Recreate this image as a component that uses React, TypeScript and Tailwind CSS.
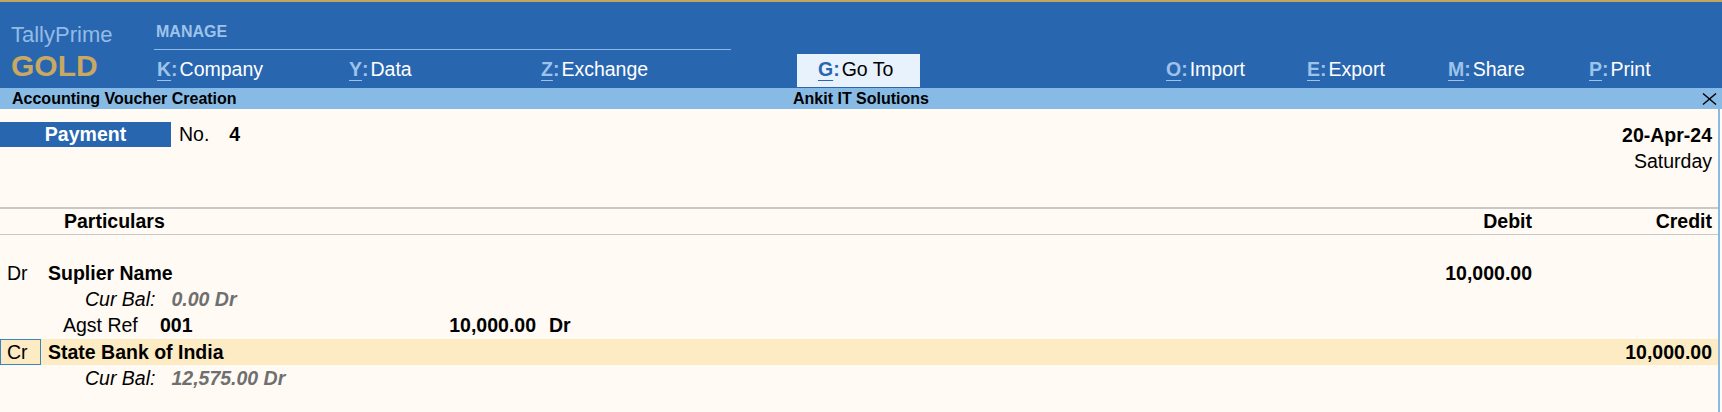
const leftMenu = [
  { k: "K", label: "Company" },
  { k: "Y", label: "Data" },
  { k: "Z", label: "Exchange" },
]

const rightMenu = [
  { k: "O", label: "Import" },
  { k: "E", label: "Export" },
  { k: "M", label: "Share" },
  { k: "P", label: "Print" },
]

function MenuItem({ k, label, dark }: { k: string; label: string; dark?: boolean }) {
  return (
    <div className="flex items-baseline text-[19.5px] leading-[24px]">
      <span
        className={`font-bold underline decoration-1 underline-offset-[4px] ${
          dark ? "text-[#2966b0]" : "text-[#9dc3ea]"
        }`}
      >
        {k}
      </span>
      <span className={`font-bold mr-[2px] ${dark ? "text-[#2966b0]" : "text-[#9dc3ea]"}`}>:</span>
      <span className={dark ? "text-black" : "text-white"}>{label}</span>
    </div>
  )
}

function Header() {
  return (
    <div className="flex h-[88px] overflow-hidden border-t-2 border-[#c2a35f] bg-[#2966b0]">
      {/* logo */}
      <div className="w-[154px] shrink-0 pl-[11px] pt-[22px]">
        <div className="text-[22px] leading-[22px] text-[#93bbe6]">TallyPrime</div>
        <div className="mt-[5px] text-[30px] leading-[30px] font-bold text-[#c9a862]">GOLD</div>
      </div>

      {/* manage group */}
      <div className="w-[577px] shrink-0 pt-[22px]">
        <div className="pl-[2px] text-[16px] leading-[16px] font-bold text-[#9dc3ea]">MANAGE</div>
        <div className="mt-[9px] h-px bg-[#8ab8e8]" />
        <div className="mt-[7px] flex pl-[3px]">
          {leftMenu.map((m) => (
            <div key={m.k} className="w-[192px] shrink-0">
              <MenuItem k={m.k} label={m.label} />
            </div>
          ))}
        </div>
      </div>

      {/* go to */}
      <div className="ml-[66px] mt-[52px] h-[33px] w-[123px] shrink-0 bg-[#e8f2fc] pl-[21px] pt-[3px]">
        <MenuItem k="G" label="Go To" dark />
      </div>

      {/* right actions */}
      <div className="ml-[246px] flex shrink-0 pt-[55px]">
        {rightMenu.map((m) => (
          <div key={m.k} className="w-[141px] shrink-0">
            <MenuItem k={m.k} label={m.label} />
          </div>
        ))}
      </div>
    </div>
  )
}

function TitleBar() {
  return (
    <div className="grid h-[21px] grid-cols-[1fr_auto_1fr] bg-[#87bbe5] text-[16px] leading-[21px] font-bold text-black">
      <div className="pl-3">Accounting Voucher Creation</div>
      <div>Ankit IT Solutions</div>
      <div className="flex items-center justify-end pr-[5px]">
        <svg width="15" height="12" viewBox="0 0 15 12">
          <path d="M1 0.5 L14 11.5 M14 0.5 L1 11.5" stroke="#000" strokeWidth="1.4" fill="none" />
        </svg>
      </div>
    </div>
  )
}

export default function App() {
  return (
    <div
      className="h-[412px] w-[1722px] overflow-hidden bg-[#fffaf3] text-black"
      style={{ fontFamily: '"Liberation Sans", Arial, sans-serif' }}
    >
      <Header />
      <TitleBar />

      <div className="mr-[2px] h-[303px] border-r-2 border-[#88bbe4] text-[19.5px]">
        {/* voucher head */}
        <div className="flex h-[98px] justify-between pr-[6px] pt-[13px]">
          <div className="flex items-baseline">
            <div className="h-[25px] w-[171px] bg-[#2966b0] text-center leading-[25px] font-bold text-white">
              Payment
            </div>
            <span className="ml-[8px] leading-[25px]">No.</span>
            <span className="ml-[20px] leading-[25px] font-bold">4</span>
          </div>
          <div className="text-right leading-[26px]">
            <div className="font-bold">20-Apr-24</div>
            <div>Saturday</div>
          </div>
        </div>

        {/* column header */}
        <div className="flex h-[28px] border-t-2 border-b border-[#c8c8c8] pr-[6px] leading-[25px] font-bold">
          <div className="flex-1 pl-[64px]">Particulars</div>
          <div className="w-[150px] text-right">Debit</div>
          <div className="w-[180px] text-right">Credit</div>
        </div>

        {/* entries */}
        <div className="pt-[25px] leading-[26px]">
          <div className="flex h-[26px] pr-[6px]">
            <div className="w-[41px] pl-[7px]">Dr</div>
            <div className="flex-1 pl-[7px] font-bold">Suplier Name</div>
            <div className="w-[150px] text-right font-bold">10,000.00</div>
            <div className="w-[180px]" />
          </div>

          <div className="flex h-[26px] pl-[85px] italic">
            <span>Cur Bal:</span>
            <span className="ml-[16px] font-bold text-[#6f6f6f]">0.00 Dr</span>
          </div>

          <div className="flex h-[27px] pl-[63px]">
            <span className="w-[97px]">Agst Ref</span>
            <span className="w-[280px] font-bold">001</span>
            <span className="w-[96px] text-right font-bold">10,000.00</span>
            <span className="ml-[13px] font-bold">Dr</span>
          </div>

          <div className="flex h-[26px] bg-[#fdebc4] pr-[6px]">
            <div className="w-[41px] border border-[#3a84c4] pl-[6px] leading-[24px]">Cr</div>
            <div className="flex-1 pl-[7px] font-bold">State Bank of India</div>
            <div className="w-[150px]" />
            <div className="w-[180px] text-right font-bold">10,000.00</div>
          </div>

          <div className="flex h-[26px] pl-[85px] italic">
            <span>Cur Bal:</span>
            <span className="ml-[16px] font-bold text-[#6f6f6f]">12,575.00 Dr</span>
          </div>
        </div>
      </div>
    </div>
  )
}
